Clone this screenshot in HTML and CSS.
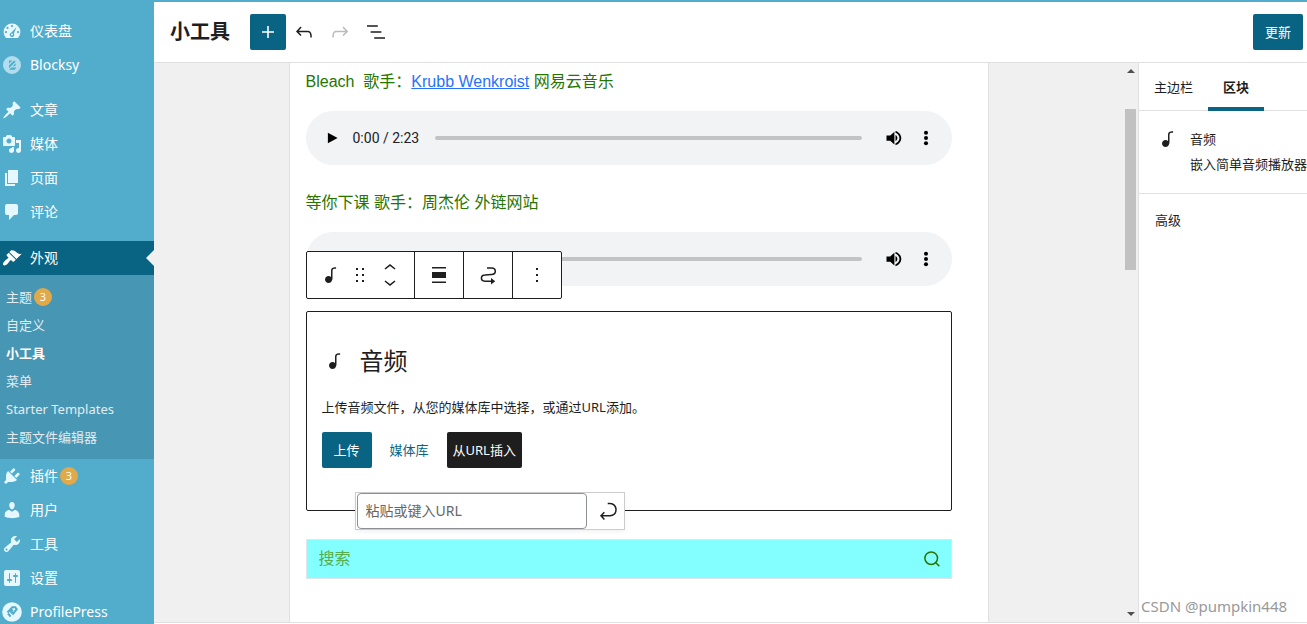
FILE: index.html
```html
<!DOCTYPE html>
<html lang="zh-CN">
<head>
<meta charset="utf-8">
<title>小工具</title>
<link rel="stylesheet" href="styles.css">
</head>
<body>
<svg class="defs" aria-hidden="true">
  <symbol id="note" viewBox="0 0 24 24"><path d="M17.7 4.300c-1.200 0-2.800 0-3.800 1-.6.6-.9 1.500-.9 2.600V14c-.6-.6-1.500-1-2.500-1C8.600 13 7 14.600 7 16.500S8.600 20 10.500 20c1.500 0 2.800-1 3.300-2.300.5-.8.7-1.800.7-2.500V7.900c0-.7.2-1.200.5-1.600.6-.6 1.800-.6 2.800-.6h.3V4.300h-.4z"/></symbol>
  <symbol id="play" viewBox="0 0 24 24"><path d="M6.500 5v14l13-7z"/></symbol>
  <symbol id="volume" viewBox="0 0 24 24"><path d="M2 8.500v7h5l5.500 5V3.500L7 8.500H2zm14.500 3.500c0-1.770-1.020-3.290-2.500-4.030v8.050c1.480-.730 2.500-2.250 2.500-4.020zM14 2.500v2.500c2.890.86 5.300 3.700 5.300 7s-2.400 6.100-5.300 7v2.500c4.200-.91 7.700-4.900 7.700-9.500S18.200 3.400 14 2.500z"/></symbol>
  <symbol id="dots" viewBox="0 0 24 24"><circle cx="12" cy="5" r="2.700"/><circle cx="12" cy="12" r="2.700"/><circle cx="12" cy="19" r="2.700"/></symbol>
</svg>
<div class="app">
  <nav class="menu" aria-label="主菜单">
    <a class="item" href="#"><svg class="dash" viewBox="0 0 20 20"><path fill-rule="evenodd" d="M4 17h12a8.600 8.600 0 0 0 2.400-6A8.400 8.400 0 0 0 1.600 11 8.600 8.600 0 0 0 4 17zM10 4a1.100 1.100 0 1 1 0 2.200A1.100 1.100 0 0 1 10 4zM5.500 5.800a1.100 1.100 0 1 1 0 2.200 1.100 1.100 0 0 1 0-2.200zM4 10a1.100 1.100 0 1 1 0 2.200A1.100 1.100 0 0 1 4 10zm12 0a1.100 1.100 0 1 1 0 2.200A1.100 1.100 0 0 1 16 10zM14.500 6l-2.700 6.500a2.200 2.200 0 1 1-2.600-.8z"/><circle cx="10" cy="13.600" r="1"/></svg>仪表盘</a>
    <a class="item" href="#"><svg class="dash pale" viewBox="0 0 20 20"><path fill-rule="evenodd" d="M10 1a9 9 0 1 1 0 18 9 9 0 0 1 0-18zM7 5.500v3.300l3.300-3.300zM12 5.500l-5 5v2.700L13.700 6.500zM13.700 8.300l-3 3h2l1-1zM9.500 12.500L7 14.800h5.500l1.300-1.300v-1z"/></svg>Blocksy</a>
    <div class="gap"></div>
    <a class="item" href="#"><svg class="dash" viewBox="0 0 20 20"><path d="M10.440 3.020l1.820-1.820 6.360 6.350-1.830 1.820c-1.050-.68-2.480-.57-3.410.36l-.75.75c-.92.93-1.040 2.350-.35 3.410l-1.830 1.820-2.410-2.410-2.800 2.790c-.42.42-3.380 2.710-3.800 2.290s1.860-3.390 2.280-3.810l2.790-2.790L4.100 9.360l1.830-1.820c1.050.69 2.480.57 3.400-.36l.75-.75c.93-.92 1.050-2.350.36-3.410z"/></svg>文章</a>
    <a class="item" href="#"><svg class="dash" viewBox="0 0 20 20"><path d="M13 11V4c0-.55-.45-1-1-1h-1.670L9 1H5L3.670 3H2c-.55 0-1 .45-1 1v7c0 .55.45 1 1 1h10c.55 0 1-.45 1-1zM7 4.500c1.380 0 2.500 1.120 2.500 2.500S8.380 9.500 7 9.500 4.500 8.380 4.500 7 5.620 4.500 7 4.500zM14 6h5v10.500c0 1.380-1.120 2.500-2.500 2.500S14 17.880 14 16.500s1.120-2.500 2.500-2.500c.17 0 .34.020.5.050V9h-3V6zm-4 8.050V13h2v3.500c0 1.380-1.120 2.500-2.500 2.500S7 17.880 7 16.500 8.120 14 9.500 14c.17 0 .34.020.5.050z"/></svg>媒体</a>
    <a class="item" href="#"><svg class="dash" viewBox="0 0 20 20"><path d="M6 15V2h10v13H6zm-1 1h8v2H3V5h2v11z"/></svg>页面</a>
    <a class="item" href="#"><svg class="dash" viewBox="0 0 20 20"><path d="M5 2h9c1.100 0 2 .9 2 2v7c0 1.100-.9 2-2 2h-2l-5 5v-5H5c-1.100 0-2-.9-2-2V4c0-1.100.9-2 2-2z"/></svg>评论</a>
    <div class="gap wide"></div>
    <a class="item current" href="#"><svg class="dash" viewBox="0 0 20 20"><path d="M14.480 11.060L7.410 3.990l1.500-1.500c.5-.56 2.300-.47 3.510.32 1.210.8 1.430 1.280 2.910 2.100 1.180.64 2.450 1.260 4.450.85zm-.71.71L6.700 4.700 4.930 6.470c-.39.39-.39 1.020 0 1.410l1.060 1.060c.39.39.39 1.030 0 1.420-.6.6-1.430 1.110-2.210 1.690-.35.26-.7.53-1.010.84C1.430 14.230.4 16.080 1.400 17.070c.99 1 2.840-.03 4.180-1.360.31-.31.58-.66.85-1.020.57-.78 1.080-1.610 1.690-2.210.39-.39 1.020-.39 1.410 0l1.060 1.060c.39.39 1.020.39 1.410 0z"/></svg>外观</a>
    <div class="submenu">
      <a href="#">主题<span class="count">3</span></a>
      <a href="#">自定义</a>
      <a class="on" href="#">小工具</a>
      <a href="#">菜单</a>
      <a href="#">Starter Templates</a>
      <a href="#">主题文件编辑器</a>
    </div>
    <a class="item" href="#"><svg class="dash" viewBox="0 0 20 20"><path d="M13.110 4.360L9.870 7.600 8 5.730l3.240-3.240c.35-.34 1.050-.2 1.560.32.52.51.66 1.210.31 1.550zm-8 1.770l.91-1.120 9.010 9.010-1.190.84c-.71.71-2.630 1.160-3.820 1.160H6.140L4.900 17.260c-.59.59-1.540.59-2.120 0-.59-.58-.59-1.530 0-2.120l1.240-1.240v-3.880c0-1.130.4-3.190 1.090-3.890zm7.260 3.970l3.240-3.240c.34-.35 1.040-.21 1.550.31.52.51.66 1.210.31 1.550l-3.240 3.250z"/></svg>插件<span class="count">3</span></a>
    <a class="item" href="#"><svg class="dash" viewBox="0 0 20 20"><path d="M10 9.250c-2.270 0-2.730-3.440-2.730-3.440C7 4.020 7.820 2 9.970 2c2.160 0 2.980 2.020 2.710 3.810 0 0-.41 3.440-2.680 3.440zm0 2.570L12.720 10c2.390 0 4.520 2.330 4.520 4.530v2.490s-3.650 1.130-7.240 1.130c-3.650 0-7.240-1.130-7.240-1.130v-2.490c0-2.250 1.940-4.480 4.470-4.480z"/></svg>用户</a>
    <a class="item" href="#"><svg class="dash" viewBox="0 0 20 20"><path d="M16.680 9.770c-1.340 1.340-3.300 1.670-4.950.99l-5.410 6.520c-.99.99-2.590.99-3.580 0s-.99-2.590 0-3.570l6.520-5.420c-.68-1.650-.35-3.610.99-4.950 1.280-1.280 3.120-1.620 4.720-1.060l-2.890 2.890 2.820 2.820 2.860-2.870c.53 1.580.18 3.390-1.080 4.650zM3.810 16.210c.4.39 1.040.39 1.430 0 .4-.4.4-1.040 0-1.430-.39-.4-1.030-.4-1.430 0-.39.39-.39 1.030 0 1.430z"/></svg>工具</a>
    <a class="item" href="#"><svg class="dash" viewBox="0 0 20 20"><path d="M18 16V4c0-1.100-.9-2-2-2H4c-1.100 0-2 .9-2 2v12c0 1.100.9 2 2 2h12c1.100 0 2-.9 2-2zM8 11h1c.55 0 1 .45 1 1s-.45 1-1 1H8v1.500c0 .28-.22.5-.5.5s-.5-.22-.5-.5V13H6c-.55 0-1-.45-1-1s.45-1 1-1h1V5.500c0-.28.22-.5.5-.5s.5.22.5.5V11zm5-2h-1c-.55 0-1-.45-1-1s.45-1 1-1h1V5.500c0-.28.22-.5.5-.5s.5.22.5.5V7h1c.55 0 1 .45 1 1s-.45 1-1 1h-1v5.500c0 .28-.22.5-.5.5s-.5-.22-.5-.5V9z"/></svg>设置</a>
    <a class="item" href="#"><svg class="dash" viewBox="0 0 20 20"><circle cx="10" cy="10" r="9.800"/><path class="badge" d="M5.500 10.500l4.800-5.200h3l1.400 1.900-3.600 4.500-2.200-1.900 2-2M6 11.500l2.700 3"/></svg>ProfilePress</a>
  </nav>

  <div class="main">
    <header class="topbar">
      <h1>小工具</h1>
      <button class="primary add" type="button" aria-label="添加区块"><svg class="ico" viewBox="0 0 24 24"><path d="M18 11.200h-5.200V6h-1.600v5.200H6v1.600h5.200V18h1.600v-5.200H18z"/></svg></button>
      <button class="tool" type="button" aria-label="撤销"><svg class="ico" viewBox="0 0 24 24"><path d="M18.300 11.700c-.6-.6-1.400-.9-2.300-.9H6.700l2.900-3.300-1.100-1-4.500 5L8.500 16l1-1-2.700-2.700H16c.5 0 .9.2 1.300.5 1 1 1 3.400 1 4.500v.3h1.500v-.2c0-1.500 0-4.300-1.500-5.700z"/></svg></button>
      <button class="tool" type="button" aria-label="重做" disabled><svg class="ico" viewBox="0 0 24 24"><path d="M15.600 6.500l-1.100 1 2.900 3.300H8c-.9 0-1.700.3-2.300.9-1.400 1.500-1.400 4.200-1.400 5.600v.2h1.500v-.3c0-1.100 0-3.500 1-4.500.3-.3.7-.5 1.300-.5h9.200L14.500 15l1.100 1.100 4.600-4.600-4.600-5z"/></svg></button>
      <button class="tool" type="button" aria-label="列表视图"><svg class="ico" viewBox="0 0 24 24"><path d="M13.800 5.200H3v1.500h10.800V5.200zm-3.600 12v1.500H21v-1.500H10.200zm7.200-6H6.600v1.500h10.800v-1.500z"/></svg></button>
      <button class="primary update" type="button">更新</button>
    </header>

    <div class="work">
      <div class="canvas">
        <main class="area">
          <p class="text">Bleach&nbsp; 歌手：<a href="#">Krubb Wenkroist</a> 网易云音乐</p>
          <div class="player">
            <button type="button" aria-label="播放"><svg class="ico"><use href="#play"/></svg></button>
            <span class="time">0:00 / 2:23</span>
            <input class="seek" type="range" value="0" aria-label="播放进度">
            <button type="button" aria-label="静音"><svg class="ico"><use href="#volume"/></svg></button>
            <button type="button" aria-label="更多"><svg class="ico"><use href="#dots"/></svg></button>
          </div>
          <p class="text second">等你下课 歌手：周杰伦 外链网站</p>
          <div class="player">
            <button type="button" aria-label="播放"><svg class="ico"><use href="#play"/></svg></button>
            <span class="time">0:00 / 3:52</span>
            <input class="seek" type="range" value="0" aria-label="播放进度">
            <button type="button" aria-label="静音"><svg class="ico"><use href="#volume"/></svg></button>
            <button type="button" aria-label="更多"><svg class="ico"><use href="#dots"/></svg></button>
          </div>

          <section class="block">
            <div class="toolbar" role="toolbar" aria-label="区块工具">
              <div class="group first">
                <button type="button" aria-label="音频"><svg class="ico"><use href="#note"/></svg></button>
                <button type="button" aria-label="拖动"><svg class="ico" viewBox="0 0 24 24"><path d="M8 7h2V5H8v2zm0 6h2v-2H8v2zm0 6h2v-2H8v2zm6-14v2h2V5h-2zm0 8h2v-2h-2v2zm0 6h2v-2h-2v2z"/></svg></button>
                <div class="movers">
                  <button type="button" aria-label="上移"><svg viewBox="6 7 12 8"><path d="M6.500 12.400L12 8l5.500 4.400-.9 1.200L12 10l-4.500 3.600-1-1.200z"/></svg></button>
                  <button type="button" aria-label="下移"><svg viewBox="6 9 12 8"><path d="M17.500 11.600L12 16l-5.500-4.400.9-1.200L12 14l4.500-3.600 1 1.200z"/></svg></button>
                </div>
              </div>
              <div class="group"><button type="button" aria-label="对齐"><svg class="ico" viewBox="0 0 24 24"><path d="M5 9v6h14V9H5zm0-5v1.500h14V4H5zm0 16h14v-1.500H5z"/></svg></button></div>
              <div class="group"><button type="button" aria-label="转换"><svg class="ico" viewBox="0 0 24 24"><path class="line" d="M11 5h4.500c2.200 0 3.800 1.300 3.800 3.200 0 2.100-1.700 3.200-3.800 3.300l-6.500.5c-2 .1-3.600 1.300-3.600 3.100s1.500 3.100 3.600 3.100H16"/><path d="M15 15l4.200 3.200L15 21.500z"/></svg></button></div>
              <div class="group"><button type="button" aria-label="选项"><svg class="ico" viewBox="0 0 24 24"><path d="M13 19h-2v-2h2v2zm0-6h-2v-2h2v2zm0-6h-2V5h2v2z"/></svg></button></div>
            </div>
            <h2><svg class="ico"><use href="#note"/></svg>音频</h2>
            <p>上传音频文件，从您的媒体库中选择，或通过URL添加。</p>
            <div class="actions">
              <button class="primary" type="button">上传</button>
              <button class="library" type="button">媒体库</button>
              <button class="insert" type="button">从URL插入</button>
            </div>
            <form class="urlbox">
              <input type="url" placeholder="粘贴或键入URL" aria-label="粘贴或键入URL">
              <button type="button" aria-label="应用"><svg class="ico" viewBox="0 0 24 24"><path d="M6.734 16.106l2.176-2.380-1.093-1.028-3.846 4.158 3.846 4.157 1.093-1.027-2.176-2.380h2.811c1.125 0 2.250.03 3.374 0 1.428-.001 3.362-.25 4.963-1.277 1.660-1.065 2.868-2.906 2.868-5.859 0-2.479-1.327-4.896-3.650-5.930-1.820-.813-3.044-.8-4.806-.788l-.567.002v1.500c.184 0 .368 0 .553-.002 1.820-.007 2.704-.014 4.210.657 1.854.827 2.760 2.657 2.760 4.561 0 2.472-.973 3.824-2.178 4.596-1.258.807-2.864 1.040-4.163 1.040H6.734z"/></svg></button>
            </form>
          </section>

          <form class="search">
            <input type="search" placeholder="搜索" aria-label="搜索">
            <button type="button" aria-label="搜索"><svg viewBox="0 0 16 16"><circle cx="7.200" cy="7.200" r="6.300"/><path d="M11.800 11.800l3.500 3.300"/></svg></button>
          </form>
        </main>
        <div class="scroll" aria-hidden="true">
          <span class="arrow up"></span>
          <span class="thumb"></span>
          <span class="arrow down"></span>
        </div>
      </div>

      <aside class="panel">
        <div class="tabs">
          <button type="button">主边栏</button>
          <button class="active" type="button">区块</button>
        </div>
        <div class="card">
          <svg class="ico"><use href="#note"/></svg>
          <div>
            <h3>音频</h3>
            <p>嵌入简单音频播放器</p>
          </div>
        </div>
        <button class="advanced" type="button">高级</button>
        <span class="mark">CSDN @pumpkin448</span>
      </aside>
    </div>
  </div>
</div>
</body>
</html>
```
FILE: styles.css
```css
* { box-sizing: border-box; }
body {
  margin: 0;
  background: #fff;
  color: #1e1e1e;
  font: 13px/20px "Noto Sans", "Noto Sans CJK SC", sans-serif;
}
h1, h2, h3, p { margin: 0; font-weight: 400; }
a { color: inherit; text-decoration: none; }
button {
  display: flex;
  align-items: center;
  justify-content: center;
  padding: 0;
  border: 0;
  background: none;
  color: inherit;
  font: inherit;
}
svg { fill: currentColor; }
.defs { display: none; }
.ico { width: 24px; height: 24px; flex: none; }
.app { display: flex; height: 100vh; overflow: hidden; }

/* Admin menu */
.menu {
  flex: none;
  width: 154px;
  padding-top: 14px;
  overflow: hidden;
  background: #52accc;
  color: #fff;
}
.item {
  display: flex;
  align-items: center;
  height: 34px;
  padding-left: 2px;
  font-size: 14px;
}
.dash { width: 20px; height: 20px; margin-right: 8px; color: #e5f8ff; }
.pale { opacity: .65; }
.badge { fill: none; stroke: #52accc; stroke-width: 2; }
.gap { height: 11px; }
.wide { height: 12px; }
.current { position: relative; background: #096484; }
.current .dash { color: #fff; }
.current::after {
  content: "";
  position: absolute;
  right: 0;
  border: 8px solid transparent;
  border-right-color: #f0f0f0;
  border-left-width: 0;
}
.submenu { padding: 8px 6px; background: #4796b3; color: #e2ecf1; }
.submenu a { display: flex; align-items: center; height: 28px; }
.submenu .on { color: #fff; font-weight: 700; }
.count {
  width: 18px;
  height: 18px;
  margin-left: 2px;
  border-radius: 9px;
  background: #e1a948;
  color: #fff;
  font-size: 11px;
  line-height: 17px;
  text-align: center;
}

/* Header */
.main {
  flex: 1;
  min-width: 0;
  display: flex;
  flex-direction: column;
  border-top: 2px solid #52accc;
}
.topbar {
  flex: none;
  display: flex;
  align-items: center;
  height: 61px;
  padding: 0 4px 0 16px;
  border-bottom: 1px solid #e0e0e0;
}
.topbar h1 { margin-right: 20px; font-size: 20px; line-height: 28px; font-weight: 700; }
.primary { height: 36px; border-radius: 2px; background: #096484; color: #fff; }
.add, .tool { width: 36px; height: 36px; }
.tool:disabled { color: #bbb; }
.update { width: 50px; margin-left: auto; }

/* Canvas */
.work { flex: 1; min-height: 0; display: flex; margin-bottom: 1px; border-bottom: 1px solid #e0e0e0; }
.canvas { flex: 1; min-width: 0; display: flex; background: #f0f0f0; }
.area {
  flex: 0 1 700px;
  min-width: 0;
  margin: 0 auto;
  padding: 6px 36px 0 16px;
  border: solid #e0e0e0;
  border-width: 0 1px;
  background: #fff;
}
.text {
  color: #267500;
  font: 16px/26px "Liberation Sans", "Noto Sans CJK SC", sans-serif;
  margin-bottom: 16px;
}
.text a { color: #2872fa; text-decoration: underline; }
.second { margin-top: 25px; }
.player {
  display: flex;
  align-items: center;
  height: 54px;
  padding: 0 10px 0 14px;
  border-radius: 27px;
  background: #f1f3f4;
  color: #000;
}
.player button { width: 32px; height: 32px; }
.player .ico { width: 18px; height: 18px; }
.player button:first-child { width: 24px; }
.time { margin: 0 16px 0 9px; color: #202124; font: 14px/18px Roboto, sans-serif; white-space: nowrap; }
.seek {
  flex: 1;
  min-width: 0;
  height: 4px;
  margin: 0 16px 0 0;
  border-radius: 2px;
  background: #c1c3c4;
  appearance: none;
}
.seek::-webkit-slider-thumb { appearance: none; width: 1px; height: 4px; }

/* Audio block */
.block {
  position: relative;
  height: 200px;
  margin: 25px 0 28px;
  padding: 31px 15px 0;
  border: 1px solid #1e1e1e;
  border-radius: 2px;
}
.toolbar {
  position: absolute;
  top: -61px;
  left: -1px;
  display: flex;
  height: 48px;
  border: 1px solid #1e1e1e;
  border-radius: 2px;
  background: #fff;
}
.group { display: flex; align-items: center; justify-content: center; width: 49px; border-left: 1px solid #1e1e1e; }
.first { width: 107px; border: 0; }
.first > button:first-child { width: 36px; }
.movers { display: flex; flex-direction: column; gap: 8px; width: 36px; align-items: center; }
.movers svg { display: block; width: 12px; height: 8px; }
.line { fill: none; stroke: currentColor; stroke-width: 1.5; }
.block h2 { display: flex; align-items: center; gap: 14px; font-size: 24px; line-height: 36px; }
.block > p { margin: 18px 0 15px; }
.actions { display: flex; }
.actions .primary { width: 50px; }
.library { width: 75px; color: #096484; }
.insert { height: 36px; padding: 0 6px; border-radius: 2px; background: #1e1e1e; color: #fff; }
.urlbox {
  position: absolute;
  top: 180px;
  left: 48px;
  display: flex;
  width: 270px;
  height: 38px;
  padding: 0 0 0 1px;
  border: 1px solid #ccc;
  background: #fff;
  box-shadow: 0 2px 4px #0000000d;
}
.urlbox input {
  width: 230px;
  padding: 0 8px;
  border: 1px solid #8c8f94;
  border-radius: 4px;
  color: inherit;
  font: inherit;
  font-size: 14px;
}
.urlbox input::placeholder { color: #666; }
.urlbox button { flex: 1; padding-left: 6px; }
.search {
  display: flex;
  align-items: center;
  height: 40px;
  padding: 0 11px 0 12px;
  border: 1px solid #e0e5eb;
  background: #84ffff;
  color: #267500;
}
.search input {
  flex: 1;
  min-width: 0;
  padding: 0;
  border: 0;
  background: none;
  color: inherit;
  font: 16px/24px "Liberation Sans", "Noto Sans CJK SC", sans-serif;
}
.search input::placeholder { color: #57ad4b; }
.search svg { width: 16px; height: 16px; fill: none; stroke: currentColor; stroke-width: 1.5; }

/* Scroll bar */
.scroll { flex: none; display: flex; flex-direction: column; align-items: center; width: 15px; padding: 6px 0 6px; }
.arrow { border: 4px solid transparent; }
.up { border-top-width: 0; border-bottom-color: #505050; }
.down { margin-top: auto; border-bottom-width: 0; border-top-color: #505050; }
.thumb { width: 11px; height: 161px; margin-top: 36px; background: #c1c1c1; }

/* Settings panel */
.panel {
  flex: none;
  display: flex;
  flex-direction: column;
  width: 169px;
  overflow: hidden;
  border-left: 1px solid #e0e0e0;
}
.tabs { display: flex; height: 48px; border-bottom: 1px solid #e0e0e0; }
.tabs button { height: 48px; padding: 4px 15px 0; border-bottom: 4px solid transparent; }
.tabs .active { border-color: #096484; font-weight: 700; }
.card { display: flex; gap: 11px; height: 83px; padding: 16px 0 0 16px; border-bottom: 1px solid #e0e0e0; white-space: nowrap; }
.card h3 { margin: 2px 0 5px; font-size: 13px; line-height: 20px; }
.advanced { justify-content: flex-start; height: 52px; padding: 0 16px; }
.mark {
  margin: auto 0 6px 2px;
  color: #999;
  font: 15px/20px "Noto Sans", sans-serif;
  white-space: nowrap;
}
```
